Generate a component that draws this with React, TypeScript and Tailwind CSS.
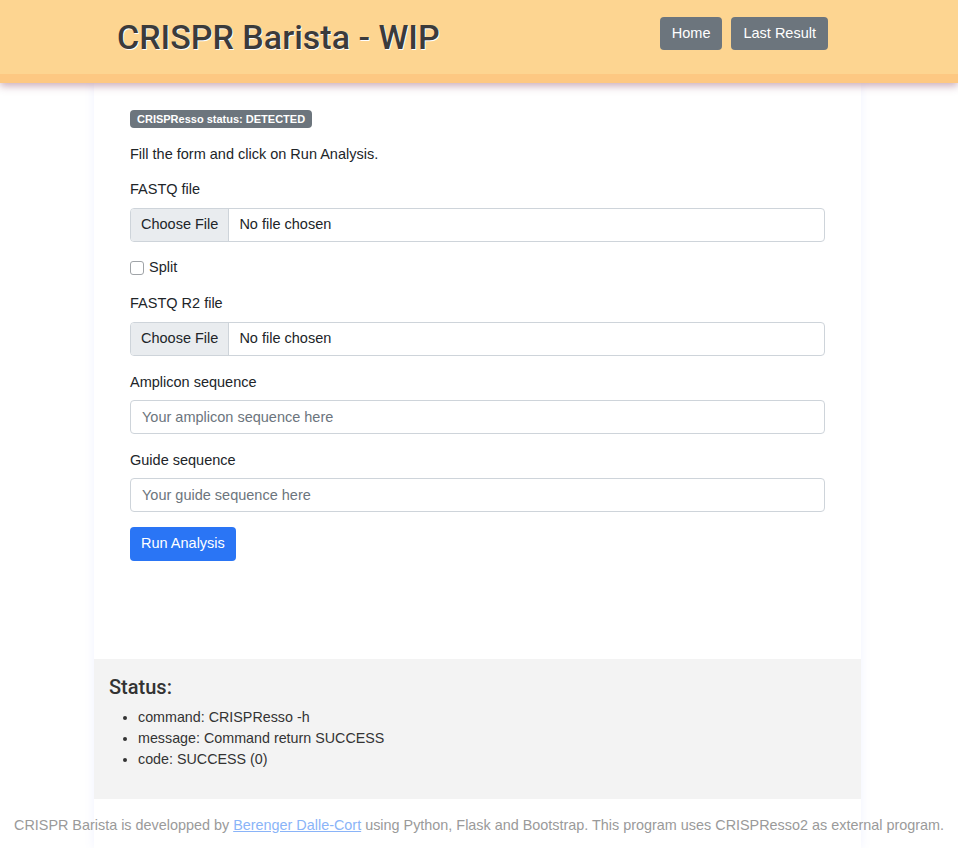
import React from "react";

const font = { fontFamily: '"Liberation Sans", Arial, Helvetica, sans-serif' };
const roboto = { fontFamily: 'Roboto, "Liberation Sans", Arial, sans-serif' };

function FileInput() {
  return (
    <div className="flex h-[34px] w-full overflow-hidden rounded-[4px] border border-[#ced4da] bg-white text-[14.5px] text-[#212529]">
      <div className="flex items-center border-r border-[#ced4da] bg-[#e9ecef] px-[10px]">Choose File</div>
      <div className="flex items-center px-[10px]">No file chosen</div>
    </div>
  );
}

function TextInput({ placeholder }: { placeholder: string }) {
  return (
    <input
      className="block h-[34px] w-full rounded-[4px] border border-[#ced4da] bg-white px-[11px] text-[14.5px] text-[#212529] outline-none placeholder:text-[#6c757d]"
      placeholder={placeholder}
      style={font}
    />
  );
}

export default function App() {
  return (
    <div className="min-h-[848px] w-full overflow-hidden bg-white text-[#212529]" style={font}>
      <header className="relative z-10 w-full bg-[#fdd591] shadow-[0_3px_8px_rgba(140,70,100,0.45)]">
        <div className="flex h-[74px] items-center justify-between pl-[117px] pr-[130px]">
          <h1
            className="text-[34px] font-medium leading-none text-[#3b3b3b] [text-shadow:1px_1px_0_#fff]"
            style={roboto}
          >
            CRISPR Barista - WIP
          </h1>
          <div className="-mt-[7px] flex gap-[9px]">
            <button className="h-[33px] rounded-[4px] bg-[#6c757d] px-[12px] text-[14.5px] text-white">Home</button>
            <button className="h-[33px] rounded-[4px] bg-[#6c757d] px-[12px] text-[14.5px] text-white">Last Result</button>
          </div>
        </div>
        <div className="h-[9px] bg-[#fdc882]" />
      </header>

      <div className="ml-[94px] w-[767px] bg-white shadow-[0_0_10px_rgba(110,130,255,0.10)]">
        <div className="h-[576px] px-[36px] pt-[27px]">
          <div className="flex">
            <span className="flex h-[18px] items-center rounded-[4px] bg-[#6c757d] px-[7px] text-[11px] font-bold text-white">
              CRISPResso status: DETECTED
            </span>
          </div>
          <p className="mt-[16px] text-[14.5px] leading-[21px]">Fill the form and click on Run Analysis.</p>

          <div className="mt-[14px]">
            <label className="mb-[8px] block text-[14.5px] leading-[21px]">FASTQ file</label>
            <FileInput />
          </div>

          <div className="mt-[15px] flex h-[21px] items-center">
            <span className="h-[14px] w-[14px] rounded-[3px] border border-[#a0a4a8] bg-white" />
            <span className="ml-[5px] text-[14.5px]">Split</span>
          </div>

          <div className="mt-[15px]">
            <label className="mb-[8px] block text-[14.5px] leading-[21px]">FASTQ R2 file</label>
            <FileInput />
          </div>

          <div className="mt-[16px]">
            <label className="mb-[7px] block text-[14.5px] leading-[21px]">Amplicon sequence</label>
            <TextInput placeholder="Your amplicon sequence here" />
          </div>

          <div className="mt-[16px]">
            <label className="mb-[7px] block text-[14.5px] leading-[21px]">Guide sequence</label>
            <TextInput placeholder="Your guide sequence here" />
          </div>

          <button className="mt-[15px] h-[34px] rounded-[4px] bg-[#2a75f5] px-[11px] text-[14.5px] text-white">
            Run Analysis
          </button>
        </div>

        <div className="h-[140px] bg-[#f3f3f3] px-[15px] pt-[16px]">
          <h3 className="text-[20px] font-medium leading-[24px] text-[#333]" style={roboto}>
            Status:
          </h3>
          <ul className="mt-[8px] list-disc pl-[29px] text-[14.3px] leading-[21px] text-[#333]">
            <li>command: CRISPResso -h</li>
            <li>message: Command return SUCCESS</li>
            <li>code: SUCCESS (0)</li>
          </ul>
        </div>

        <div className="h-[49px]" />
      </div>

      <div className="absolute left-0 top-[813px] w-full text-center text-[14.4px] leading-[24px] text-[#9a9a9a]">
        CRISPR Barista is developped by{" "}
        <a className="text-[#8ab4f8] underline" href="#">
          Berenger Dalle-Cort
        </a>{" "}
        using Python, Flask and Bootstrap. This program uses CRISPResso2 as external program.
      </div>
    </div>
  );
}
